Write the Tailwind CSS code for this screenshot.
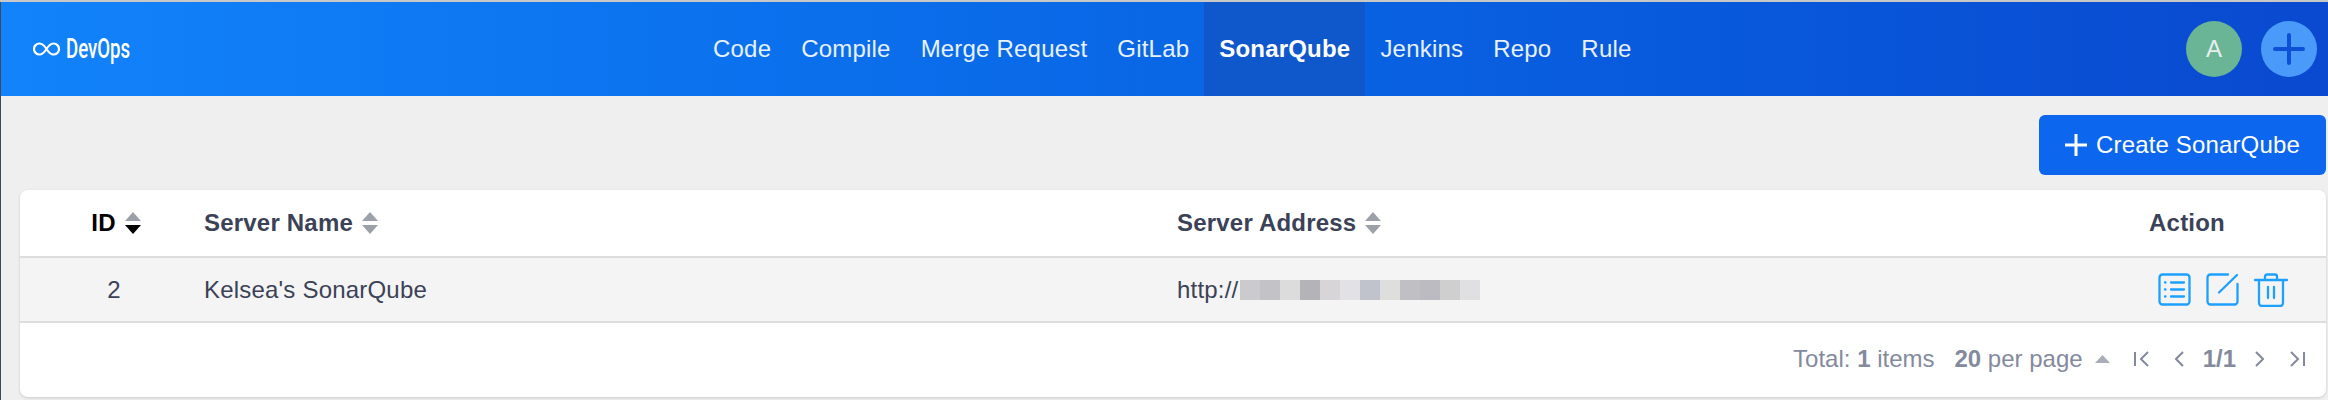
<!doctype html>
<html lang="en">
  <head>
    <meta charset="UTF-8" />
    <title>DevOps</title>
    <script src="https://cdn.jsdelivr.net/npm/@tailwindcss/browser@4"></script>
  </head>

  <body class="bg-[#efefef] h-[400px] overflow-hidden font-['Liberation_Sans',Arial,sans-serif]">
    <div class="h-[2px] bg-[#c8c8c8]"></div>
    <div class="flex h-[398px]">
      <div class="w-[1px] bg-[#3a4a63] shrink-0"></div>
      <div class="flex-1 min-w-0">
        <!-- Top nav -->
        <header class="h-[94px] flex items-center bg-gradient-to-r from-[#1283fb] to-[#0a49d0] text-white">
          <div class="flex items-center pl-[32px] w-[697px] shrink-0">
            <svg width="27" height="14" viewBox="0 0 27 14" fill="none" stroke="white" stroke-width="2.2">
              <path d="M13.5 7C11 3 9 1.500 6.500 1.500a5.500 5.500 0 0 0 0 11C9 12.500 11 11 13.500 7s4.500-5.500 7-5.500a5.500 5.500 0 0 1 0 11c-2.500 0-4.500-1.500-7-5.500z" />
            </svg>
            <span class="ml-[6px] text-[27px] origin-left scale-x-[0.69] font-['Roboto',sans-serif] font-medium leading-none">DevOps</span>
          </div>
          <nav class="flex h-full text-[24px] tracking-[0.2px] text-[#e8f1ff]">
            <a class="px-[15px] flex items-center">Code</a>
            <a class="px-[15px] flex items-center">Compile</a>
            <a class="px-[15px] flex items-center">Merge Request</a>
            <a class="px-[15px] flex items-center">GitLab</a>
            <a class="px-[15px] flex items-center bg-[#0f58cc] text-white font-bold">SonarQube</a>
            <a class="px-[15px] flex items-center">Jenkins</a>
            <a class="px-[15px] flex items-center">Repo</a>
            <a class="px-[15px] flex items-center">Rule</a>
          </nav>
          <div class="flex flex-1 items-center gap-[19px] pr-[11px] justify-end">
            <div class="w-[56px] h-[56px] rounded-full bg-[#69b596] flex items-center justify-center text-[24px] text-[#e8eef0]">A</div>
            <div class="w-[56px] h-[56px] rounded-full bg-[#4a9bf9] flex items-center justify-center">
              <svg width="32" height="32" viewBox="0 0 32 32" stroke="#0d4fd6" stroke-width="4" stroke-linecap="round">
                <path d="M16 2v28M2 16h28" />
              </svg>
            </div>
          </div>
        </header>

        <!-- Content -->
        <main class="pl-[19px] pr-[2px]">
          <div class="flex justify-end pt-[19px] pb-[15px]">
            <button class="h-[60px] w-[287px] rounded-[6px] bg-[#0c66ee] text-white text-[24px] tracking-[0.15px] flex items-center justify-center gap-[9px]">
              <svg width="22" height="22" viewBox="0 0 22 22" stroke="white" stroke-width="3">
                <path d="M11 0v22M0 11h22" />
              </svg>
              Create SonarQube
            </button>
          </div>

          <div class="bg-white rounded-[8px] shadow-[0_1px_3px_rgba(0,0,0,0.15)] h-[207px]">
            <table class="w-full table-fixed text-[24px] tracking-[0.2px] text-[#3b4257]">
              <thead>
                <tr class="h-[67px] border-b-2 border-[#dddddd]">
                  <th class="w-[184px] font-bold text-black pl-[8px]">
                    <span class="inline-flex items-center gap-[9px]">ID
                      <svg width="16" height="22" viewBox="0 0 16 22"><path d="M8 0l8 9H0z" fill="#9ca0a8" /><path d="M0 13h16l-8 9z" fill="#000" /></svg>
                    </span>
                  </th>
                  <th class="w-[973px] text-left font-bold">
                    <span class="inline-flex items-center gap-[9px]">Server Name
                      <svg width="16" height="22" viewBox="0 0 16 22" fill="#9ca0a8"><path d="M8 0l8 9H0zM0 13h16l-8 9z" /></svg>
                    </span>
                  </th>
                  <th class="text-left font-bold">
                    <span class="inline-flex items-center gap-[9px]">Server Address
                      <svg width="16" height="22" viewBox="0 0 16 22" fill="#9ca0a8"><path d="M8 0l8 9H0zM0 13h16l-8 9z" /></svg>
                    </span>
                  </th>
                  <th class="w-[278px] font-bold text-center">Action</th>
                </tr>
              </thead>
              <tbody>
                <tr class="h-[65px] bg-[#f4f4f4] border-b-2 border-[#dddddd]">
                  <td class="text-center pl-[4px]">2</td>
                  <td>Kelsea's SonarQube</td>
                  <td>
                    <div class="flex items-center">
                      http://
                      <div class="flex h-[20px] ml-[2px]">
                        <i class="w-[20px] bg-[#cbcbcd]"></i>
                        <i class="w-[20px] bg-[#c2c2c7]"></i>
                        <i class="w-[20px] bg-[#dcdcdc]"></i>
                        <i class="w-[20px] bg-[#b3b3b8]"></i>
                        <i class="w-[20px] bg-[#d7d5d8]"></i>
                        <i class="w-[20px] bg-[#e2e2e5]"></i>
                        <i class="w-[20px] bg-[#c0c3cc]"></i>
                        <i class="w-[20px] bg-[#dededd]"></i>
                        <i class="w-[20px] bg-[#c0bfc4]"></i>
                        <i class="w-[20px] bg-[#bcbbc1]"></i>
                        <i class="w-[20px] bg-[#cfcfd0]"></i>
                        <i class="w-[20px] bg-[#e0e0e3]"></i>
                      </div>
                    </div>
                  </td>
                  <td>
                    <div class="flex items-center justify-end gap-[15px] pr-[38px] text-[#1ea0ff]">
                      <svg width="33" height="33" viewBox="0 0 33 33" fill="none" stroke="currentColor" stroke-width="2.300" stroke-linecap="round">
                        <rect x="1.500" y="1.500" width="30" height="30" rx="3" />
                        <path d="M13 9.500h13M13 16.500h13M13 23.500h13M7 9.500h.5M7 16.500h.5M7 23.500h.5" />
                      </svg>
                      <svg width="33" height="33" viewBox="0 0 33 33" fill="none" stroke="currentColor" stroke-width="2.300" stroke-linecap="round">
                        <path d="M22 1.500H4.500a3 3 0 0 0-3 3v24a3 3 0 0 0 3 3h24a3 3 0 0 0 3-3V11M31 2L13 19.500" />
                      </svg>
                      <svg width="34" height="34" viewBox="0 0 34 34" fill="none" stroke="currentColor" stroke-width="2.300" stroke-linecap="round">
                        <path d="M1 7h32M11 7V3.500a2 2 0 0 1 2-2h8a2 2 0 0 1 2 2V7M5 7v23a3 3 0 0 0 3 3h18a3 3 0 0 0 3-3V7M14 14v11M20 14v11" />
                      </svg>
                    </div>
                  </td>
                </tr>
              </tbody>
            </table>

            <!-- Pagination -->
            <div class="flex items-center justify-end h-[73px] text-[24px] text-[#848a9e] pr-[21px] pb-[2px]">
              <span>Total: <b>1</b> items</span>
              <span class="ml-[20px]"><b>20</b> per page</span>
              <svg class="ml-[12px]" width="15" height="8" viewBox="0 0 15 8" fill="#a9adb7"><path d="M7.500 0l7.500 8H0z" /></svg>
              <div class="flex items-center ml-[24px] gap-[26px]">
                <svg width="15" height="16" viewBox="0 0 15 16" fill="none" stroke="currentColor" stroke-width="2"><path d="M1 1v14M14 1L7 8l7 7" /></svg>
                <svg width="9" height="16" viewBox="0 0 9 16" fill="none" stroke="currentColor" stroke-width="2"><path d="M8 1L1 8l7 7" /></svg>
              </div>
              <b class="mx-[19px]">1/1</b>
              <div class="flex items-center gap-[26px]">
                <svg width="9" height="16" viewBox="0 0 9 16" fill="none" stroke="currentColor" stroke-width="2"><path d="M1 1l7 7-7 7" /></svg>
                <svg width="15" height="16" viewBox="0 0 15 16" fill="none" stroke="currentColor" stroke-width="2"><path d="M1 1l7 7-7 7M14 1v14" /></svg>
              </div>
            </div>
          </div>
        </main>
      </div>
    </div>
  </body>
</html>
